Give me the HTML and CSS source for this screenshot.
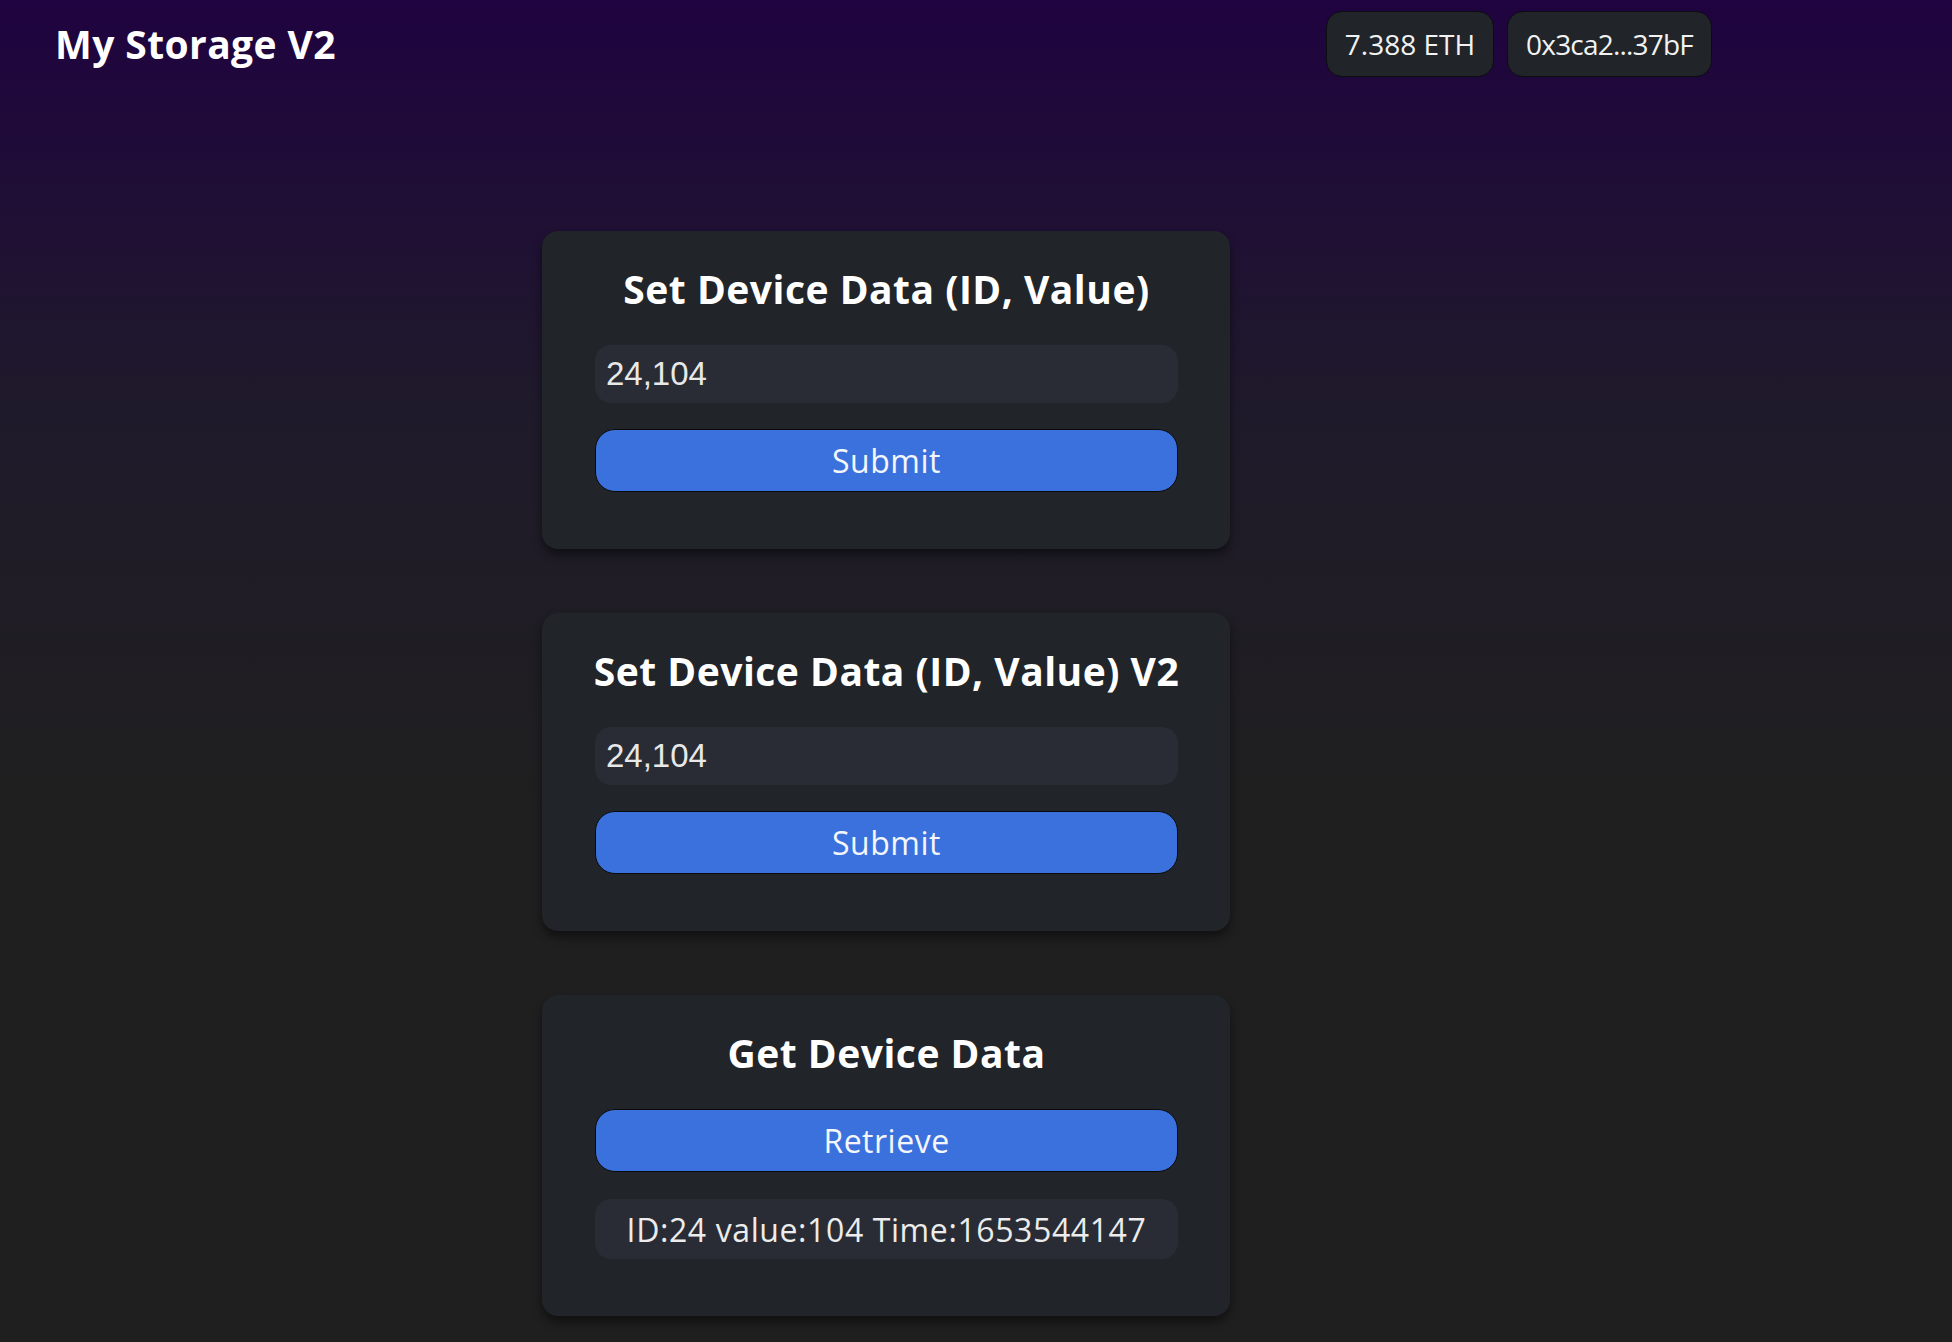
FILE: index.html
```html
<!DOCTYPE html>
<html lang="en">
<head>
<meta charset="utf-8">
<title>My Storage V2</title>
<link rel="stylesheet" href="styles.css">
</head>
<body>
<header class="topbar">
  <h1 class="brand">My Storage V2</h1>
  <div class="wallet">
    <div class="badge">7.388 ETH</div>
    <div class="badge badge-addr">0x3ca2...37bF</div>
  </div>
</header>
<main class="column">
  <section class="card">
    <h2 class="card-title">Set Device Data (ID, Value)</h2>
    <input class="field" type="text" value="24,104" readonly>
    <button class="btn" type="button">Submit</button>
  </section>
  <section class="card">
    <h2 class="card-title">Set Device Data (ID, Value) V2</h2>
    <input class="field" type="text" value="24,104" readonly>
    <button class="btn" type="button">Submit</button>
  </section>
  <section class="card">
    <h2 class="card-title">Get Device Data</h2>
    <button class="btn" type="button">Retrieve</button>
    <div class="result">ID:24 value:104 Time:1653544147</div>
  </section>
</main>
</body>
</html>
```
FILE: styles.css
```css
html {
  background: #1f1f1f;
}
body {
  margin: 0;
  min-height: 100vh;
  background: linear-gradient(180deg, #1f0340 0%, #1f1a2b 30%, #1f1f1f 60%, #1f1f1f 100%);
  font-family: "Open Sans", "Noto Sans", sans-serif;
  color: #ffffff;
}
.topbar {
  display: flex;
  align-items: center;
  justify-content: space-between;
  height: 88px;
  padding: 0 240px 0 55px;
}
.brand {
  margin: 0;
  font-size: 39px;
  line-height: 52px;
  font-weight: 700;
  letter-spacing: 0.4px;
  color: #ffffff;
}
.wallet {
  display: flex;
  gap: 13px;
}
.badge {
  box-sizing: border-box;
  height: 66px;
  display: flex;
  align-items: center;
  padding: 0 18px;
  border: 1px solid #0c0d0f;
  border-radius: 16px;
  background: #212529;
  font-size: 28px;
  color: #f2f2f2;
}
.badge-addr {
  letter-spacing: -0.8px;
}
.column {
  display: flex;
  flex-direction: column;
  gap: 64px;
  width: 688px;
  margin: 143px 0 0 542px;
}
.card {
  box-sizing: border-box;
  display: flex;
  flex-direction: column;
  padding: 32px 52px 57px 53px;
  border-radius: 16px;
  background: #212428;
  box-shadow: 0 6px 10px rgba(0, 0, 0, 0.45);
}
.card-title {
  margin: 0 -40px 30px;
  text-align: center;
  white-space: nowrap;
  font-size: 39px;
  line-height: 52px;
  font-weight: 700;
  letter-spacing: 0.5px;
  color: #ffffff;
}
.field {
  box-sizing: border-box;
  width: 100%;
  height: 58px;
  margin: 0 0 26px;
  padding: 0 11px;
  border: none;
  outline: none;
  border-radius: 16px;
  background: #292c35;
  font-family: "Liberation Sans", Arial, sans-serif;
  font-size: 33px;
  color: #e8e8e8;
}
.btn {
  box-sizing: border-box;
  width: 100%;
  height: 63px;
  border: 1px solid #0a0a0a;
  border-radius: 20px;
  background: #3b71dd;
  font-family: "Open Sans", "Noto Sans", sans-serif;
  font-size: 32px;
  letter-spacing: 0.5px;
  color: #f4f6fb;
  cursor: pointer;
}
.result {
  box-sizing: border-box;
  height: 60px;
  margin-top: 27px;
  display: flex;
  align-items: center;
  justify-content: center;
  border-radius: 16px;
  background: #292c35;
  font-size: 32px;
  letter-spacing: 0.6px;
  color: #ececec;
}
```
